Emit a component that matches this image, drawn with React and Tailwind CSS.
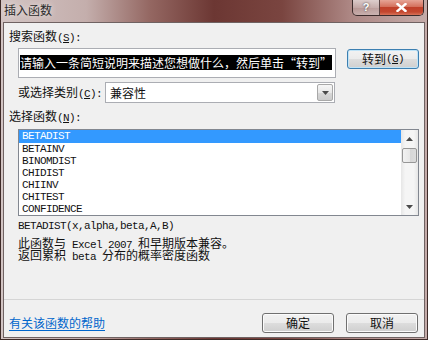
const CJK = "font-['Noto_Sans_CJK_SC',sans-serif] text-[12px]";
const MONO = "font-['Liberation_Mono',monospace] text-[11px] tracking-[-0.6px]";

function Btn({ children, focus, className = "" }) {
  return (
    <div
      className={`${className} w-[72px] h-[20px] shrink-0 rounded-[3px] border ${
        focus
          ? "border-[#3c7fb1] shadow-[inset_0_0_0_1px_#bfe3f7]"
          : "border-[#707070] shadow-[inset_0_0_0_1px_#fbfbfb]"
      } bg-[linear-gradient(to_bottom,#f2f2f2_0%,#ebebeb_50%,#dddddd_51%,#cfcfcf_100%)] flex items-center justify-center text-[#111]`}
    >
      {children}
    </div>
  );
}

function Tri({ up }) {
  return (
    <svg width="7" height="4" viewBox="0 0 7 4">
      {up ? <path d="M0 4 L3.5 0 L7 4 Z" fill="#4a4a4a" /> : <path d="M0 0 L7 0 L3.5 4 Z" fill="#4a4a4a" />}
    </svg>
  );
}

export default function App() {
  const items = ["BETADIST", "BETAINV", "BINOMDIST", "CHIDIST", "CHIINV", "CHITEST", "CONFIDENCE"];
  return (
    <div className="w-[428px] h-[340px] overflow-hidden flex flex-col border-x border-b border-[#3d2a27] px-[2px] pb-[1px] bg-[linear-gradient(to_right,#d2c4c3_0%,#c4aeac_20%,#946762_35%,#6c3733_50%,#7a4540_66%,#ad8784_82%,#c4aba9_100%)]">
      {/* title bar */}
      <div className="h-[22px] shrink-0 flex items-start">
        <div className={`${CJK} mt-[3px] ml-[1px] leading-[14px] text-[#2a2a2a] [text-shadow:0_0_6px_rgba(255,255,255,0.8)]`}>插入函数</div>
        <div className="ml-auto mr-[1px] flex h-[16px] rounded-b-[5px] border-x border-b border-[#3b2b2b] overflow-hidden">
          <div className="w-[27px] h-full flex items-center justify-center border-r border-[#5a4545] bg-[linear-gradient(to_bottom,rgba(255,255,255,0.55),rgba(255,255,255,0.25)_50%,rgba(255,255,255,0.1)_51%,rgba(255,255,255,0.3))]">
            <span className="font-['Liberation_Sans',sans-serif] font-bold text-[11px] leading-[11px] text-white [text-shadow:0_0_2px_#333]">?</span>
          </div>
          <div className="w-[43px] h-full flex items-center justify-center bg-[linear-gradient(to_bottom,#e6a496_0%,#d4705c_45%,#c0402a_50%,#c4472f_80%,#d8735a_100%)]">
            <svg width="11" height="9" viewBox="0 0 11 9">
              <path d="M1.5 1 L9.5 8 M9.5 1 L1.5 8" stroke="white" strokeWidth="2.4" strokeLinecap="square" />
            </svg>
          </div>
        </div>
      </div>

      {/* content */}
      <div className="flex-1 flex flex-col bg-[#f0f0f0] border border-[#6f6262] text-[#111]">
        <div className={`${CJK} mt-[6px] ml-[5px] h-[14px] leading-[14px] whitespace-nowrap`}>
          搜索函数<span className={MONO}>(<span className="underline underline-offset-1">S</span>):</span>
        </div>

        <div className="mt-[5px] flex items-start">
          <div className="ml-[14px] w-[318px] h-[30px] bg-white border border-[#abadb3] p-[1px] overflow-hidden">
            <span className={`${CJK} inline-block bg-black text-white h-[15px] leading-[15px] whitespace-nowrap`}>
              请输入一条简短说明来描述您想做什么，然后单击“转到”
            </span>
          </div>
          <Btn focus className="ml-[11px] mt-[1px]">
            <span className={CJK}>转到</span>
            <span className={MONO}>(<span className="underline underline-offset-1">G</span>)</span>
          </Btn>
        </div>

        <div className="mt-[4px] flex items-center h-[21px]">
          <div className={`${CJK} ml-[14px] w-[87px] leading-[21px] whitespace-nowrap`}>
            或选择类别<span className={MONO}>(<span className="underline underline-offset-1">C</span>):</span>
          </div>
          <div className="w-[230px] h-[21px] bg-white border border-[#abadb3] flex items-center">
            <span className={`${CJK} flex-1 pl-[4px] leading-[19px]`}>兼容性</span>
            <div className="w-[16px] h-[17px] mr-[1px] border border-[#a8a8a8] rounded-[2px] bg-[linear-gradient(to_bottom,#f6f6f6_0%,#e8e8e8_50%,#d8d8d8_51%,#cccccc_100%)] flex items-center justify-center">
              <Tri />
            </div>
          </div>
        </div>

        <div className={`${CJK} mt-[6px] ml-[5px] h-[14px] leading-[14px] whitespace-nowrap`}>
          选择函数<span className={MONO}>(<span className="underline underline-offset-1">N</span>):</span>
        </div>

        <div className="mt-[6px] ml-[14px] w-[401px] h-[87px] bg-white border border-[#828790] flex">
          <div className="flex-1 flex flex-col">
            {items.map((it, i) =>
              i === 0 ? (
                <div key={it} className={`${MONO} h-[13px] leading-[13px] pl-[3px] bg-[#3399ff] text-white`}>{it}</div>
              ) : (
                <div key={it} className={`${MONO} h-[12px] leading-[12px] pl-[3px]`}>{it}</div>
              )
            )}
          </div>
          <div className="w-[17px] flex flex-col bg-[linear-gradient(to_right,#e6e6e6,#f5f5f5_25%,#f5f5f5_75%,#e6e6e6)]">
            <div className="h-[17px] flex items-center justify-center"><Tri up /></div>
            <div className="mx-[1px] mt-[1px] h-[15px] rounded-[2px] border border-[#979797] bg-[linear-gradient(to_right,#f2f2f2,#e8e8e8_50%,#d6d6d6_51%,#dcdcdc)]" />
            <div className="flex-1" />
            <div className="h-[17px] flex items-center justify-center"><Tri /></div>
          </div>
        </div>

        <div className={`${MONO} mt-[4px] ml-[14px] h-[12px] leading-[12px] whitespace-pre`}>BETADIST(x,alpha,beta,A,B)</div>
        <div className="mt-[4px] ml-[14px] h-[12px] leading-[12px] whitespace-pre">
          <span className={CJK}>此函数与</span><span className={MONO}> Excel 2007 </span><span className={CJK}>和早期版本兼容。</span>
        </div>
        <div className="ml-[14px] h-[12px] leading-[12px] whitespace-pre">
          <span className={CJK}>返回累积</span><span className={MONO}> beta </span><span className={CJK}>分布的概率密度函数</span>
        </div>

        <div className="mt-[39px] h-[1px] bg-[#d5d5d5]" />

        <div className="mt-[13px] h-[20px] flex items-center">
          <span className={`${CJK} ml-[5px] text-[#0066cc] underline underline-offset-2 leading-[14px]`}>有关该函数的帮助</span>
          <Btn className="ml-auto">
            <span className={CJK}>确定</span>
          </Btn>
          <Btn className="ml-[12px] mr-[6px]">
            <span className={CJK}>取消</span>
          </Btn>
        </div>
      </div>
    </div>
  );
}
